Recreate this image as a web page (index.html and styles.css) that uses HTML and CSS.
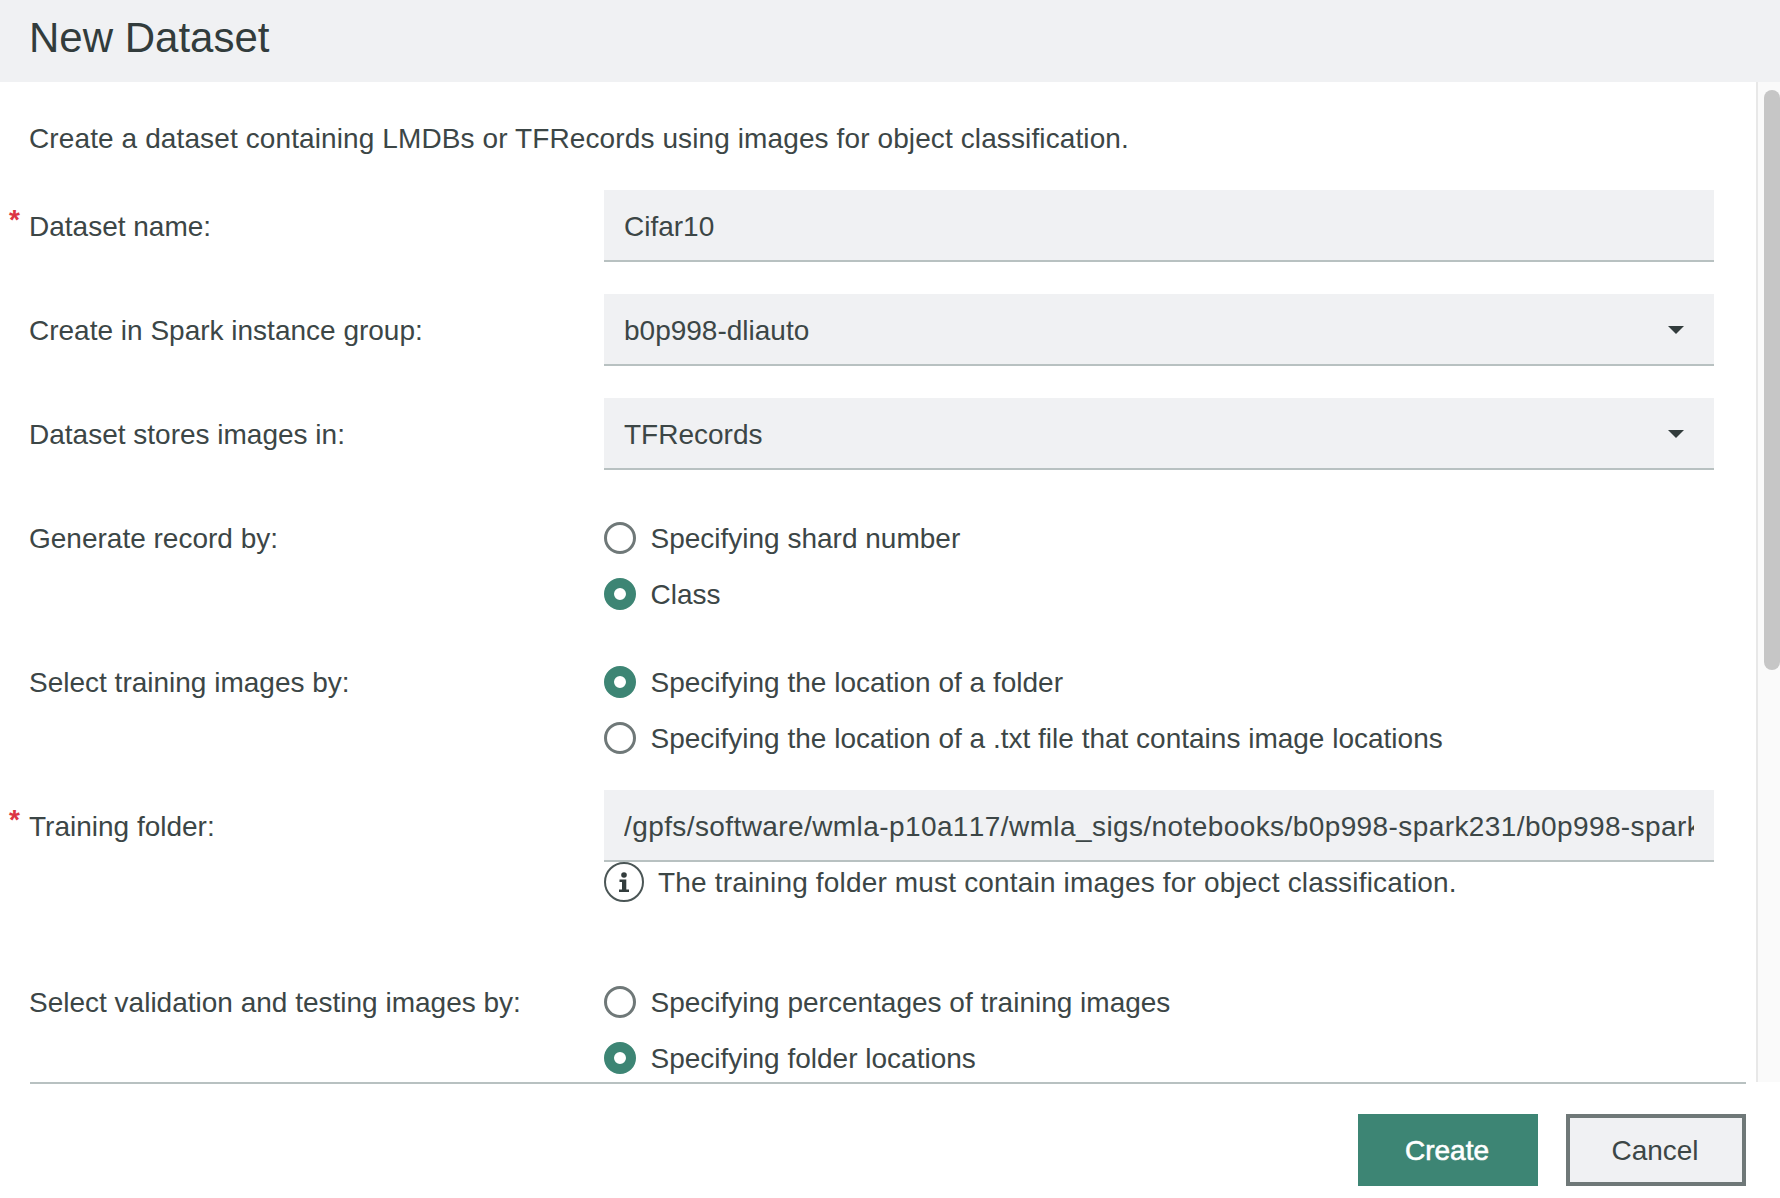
FILE: index.html
```html
<!DOCTYPE html>
<html lang="en">
<head>
<meta charset="utf-8">
<title>New Dataset</title>
<link rel="stylesheet" href="styles.css">
</head>
<body>
<div class="dialog">
  <header class="dialog-header"><h1 class="title">New Dataset</h1></header>
  <div class="dialog-body">
    <main class="form">
      <p class="intro">Create a dataset containing LMDBs or TFRecords using images for object classification.</p>
      <div class="row">
        <div class="label"><span class="required">*</span>Dataset name:</div>
        <div class="field"><span class="value">Cifar10</span></div>
      </div>
      <div class="row">
        <div class="label">Create in Spark instance group:</div>
        <div class="field"><span class="value">b0p998-dliauto</span><svg class="caret" viewBox="0 0 16 8"><path d="M0 0H16L8 8Z"/></svg></div>
      </div>
      <div class="row">
        <div class="label">Dataset stores images in:</div>
        <div class="field"><span class="value">TFRecords</span><svg class="caret" viewBox="0 0 16 8"><path d="M0 0H16L8 8Z"/></svg></div>
      </div>
      <div class="row">
        <div class="label">Generate record by:</div>
        <div class="options">
          <div class="option"><span class="radio"></span>Specifying shard number</div>
          <div class="option"><span class="radio checked"></span>Class</div>
        </div>
      </div>
      <div class="row">
        <div class="label">Select training images by:</div>
        <div class="options">
          <div class="option"><span class="radio checked"></span>Specifying the location of a folder</div>
          <div class="option"><span class="radio"></span>Specifying the location of a .txt file that contains image locations</div>
        </div>
      </div>
      <div class="row row-folder">
        <div class="label"><span class="required">*</span>Training folder:</div>
        <div class="control">
          <div class="field"><span class="value path">/gpfs/software/wmla-p10a117/wmla_sigs/notebooks/b0p998-spark231/b0p998-spark</span></div>
          <div class="hint">
            <svg class="info" viewBox="0 0 40 40"><circle cx="20" cy="20" r="19" fill="none" stroke="#4b5656" stroke-width="2"/><circle cx="20" cy="13" r="2.8"/><path d="M15.5 17.5H22.3V27.5H25V30H15V27.5H18V20H15.5Z"/></svg>
            <span>The training folder must contain images for object classification.</span>
          </div>
        </div>
      </div>
      <div class="row">
        <div class="label">Select validation and testing images by:</div>
        <div class="options">
          <div class="option"><span class="radio"></span>Specifying percentages of training images</div>
          <div class="option"><span class="radio checked"></span>Specifying folder locations</div>
        </div>
      </div>
    </main>
    <div class="scrollbar"><div class="thumb"></div></div>
  </div>
  <footer class="dialog-footer">
    <button class="button primary">Create</button>
    <button class="button secondary">Cancel</button>
  </footer>
</div>
</body>
</html>
```
FILE: styles.css
```css
* { box-sizing: border-box; }
body {
  margin: 0;
  background: #fff;
  color: #3c4646;
  font: 28px/32px "Liberation Sans", Arial, sans-serif;
}
.dialog { display: flex; flex-direction: column; height: 1198px; overflow: hidden; }
.dialog-header { height: 82px; flex: none; background: #f0f1f3; padding: 14px 29px 0; }
.title { margin: 0; font-size: 42px; line-height: 48px; font-weight: 400; color: #323c3c; }
.dialog-body { display: flex; height: 1000px; flex: none; overflow: hidden; }
.form { flex: 1; padding: 41px 42px 0 29px; }
.intro { margin: 0 0 35px; white-space: nowrap; letter-spacing: 0.11px; }
.row { display: flex; height: 72px; margin-bottom: 32px; }
.row:has(.options) { height: 112px; }
.row-folder { height: 144px; }
.label { position: relative; width: 575px; flex: none; padding-top: 21px; white-space: nowrap; }
.required { position: absolute; left: -20px; top: 14px; color: #dc3545; font-weight: 700; }
.field {
  display: flex;
  align-items: center;
  width: 1110px;
  height: 72px;
  padding: 2px 20px 0;
  background: #f0f1f3;
  border-bottom: 2px solid #b8c1c1;
}
.value { flex: 1; overflow: hidden; white-space: nowrap; padding-top: 2px; }
.path { font-kerning: none; letter-spacing: 0.41px; }
.caret { width: 16px; height: 8px; margin-right: 10px; fill: #323c3c; }
.options { display: flex; flex-direction: column; gap: 24px; padding-top: 20px; }
.option { display: flex; gap: 14.5px; height: 32px; line-height: 34px; white-space: nowrap; }
.radio { width: 32px; height: 32px; border: 3px solid #6f7878; border-radius: 50%; }
.radio.checked { border: 10px solid #3d8574; }
.hint { display: flex; gap: 14px; line-height: 42px; height: 40px; letter-spacing: 0.17px; }
.info { width: 40px; height: 40px; fill: #323c3c; }
.scrollbar { width: 24px; flex: none; padding: 8px 0 0 6px; border-left: 2px solid #e8e8e8; background: #fafafa; }
.thumb { height: 580px; border-radius: 8px; background: #c6c6c6; }
.dialog-footer {
  display: flex;
  justify-content: flex-end;
  gap: 28px;
  height: 116px;
  margin: 0 34px 0 30px;
  padding-top: 30px;
  border-top: 2px solid #b8c1c1;
}
.button { width: 180px; height: 72px; padding: 1px 2px 0 0; font: inherit; border: 4px solid #6f7878; background: #f0f1f3; color: #3c4646; }
.primary { border-color: #3d8574; background: #3d8574; color: #fff; -webkit-text-stroke: 0.6px #fff; }
```
